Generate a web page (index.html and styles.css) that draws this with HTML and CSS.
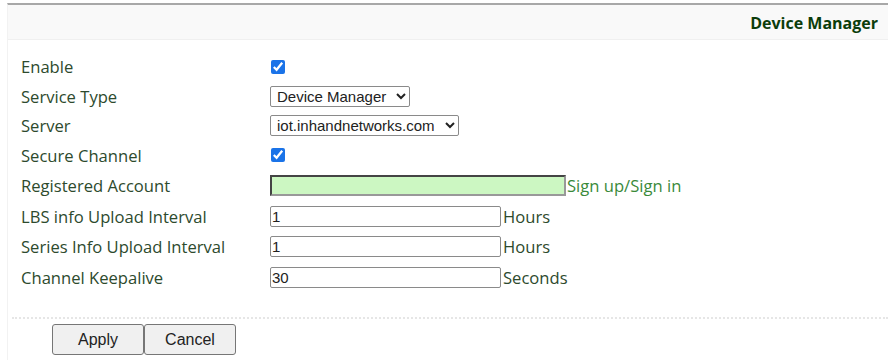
FILE: index.html
```html
<!DOCTYPE html>
<html lang="en">
<head>
  <meta charset="UTF-8">
  <title>Device Manager</title>
  <link rel="stylesheet" href="styles.css">
</head>
<body>
  <div class="page">
    <div class="title">Device Manager</div>

    <div class="form">
      <div class="row">
        <label>Enable</label>
        <div class="field"><input type="checkbox" checked></div>
      </div>
      <div class="row">
        <label>Service Type</label>
        <div class="field">
          <select class="sel-type"><option>Device Manager</option></select>
        </div>
      </div>
      <div class="row">
        <label>Server</label>
        <div class="field">
          <select class="sel-server"><option>iot.inhandnetworks.com</option></select>
        </div>
      </div>
      <div class="row">
        <label>Secure Channel</label>
        <div class="field"><input type="checkbox" checked></div>
      </div>
      <div class="row tall">
        <label>Registered Account</label>
        <div class="field">
          <input type="text" class="account" value="">
          <a href="#" class="sign">Sign up/Sign in</a>
        </div>
      </div>
      <div class="row tall">
        <label>LBS info Upload Interval</label>
        <div class="field"><input type="text" class="num" value="1"><span class="unit">Hours</span></div>
      </div>
      <div class="row tall">
        <label>Series Info Upload Interval</label>
        <div class="field"><input type="text" class="num" value="1"><span class="unit">Hours</span></div>
      </div>
      <div class="row tall">
        <label>Channel Keepalive</label>
        <div class="field"><input type="text" class="num" value="30"><span class="unit">Seconds</span></div>
      </div>
    </div>

    <div class="actions">
      <button>Apply</button><button>Cancel</button>
    </div>
  </div>
</body>
</html>
```

FILE: styles.css
```css
body {
    margin: 0;
    background: #fff;
    font-family: "Segoe UI", "Open Sans", sans-serif;
}

.page {
    margin-left: 7px;
    border-top: 2px solid #a8a8a8;
    margin-top: 3px;
    border-left: 1px solid #f2f2f2;
    min-height: 360px;
}

.title {
    background: #f9f9f9;
    border-bottom: 1px solid #f0f0f0;
    text-align: right;
    font-weight: bold;
    font-size: 16px;
    color: #0b3d0b;
    height: 34px;
    line-height: 37px;
    padding-right: 10px;
}

.form {
    padding-top: 12px;
    padding-bottom: 24px;
    border-bottom: 2px dotted #e6e6e6;
    margin-left: 4px;
}

.row {
    display: flex;
    align-items: center;
    height: 29.5px;
}

.row.tall {
    height: 30.8px;
}

.row label {
    width: 249px;
    padding-left: 9px;
    font-size: 16.6px;
    color: #2d4a2d;
}

.field {
    display: flex;
    align-items: center;
}

input[type="checkbox"] {
    margin: 0 0 0 1px;
    width: 14px;
    height: 14px;
    accent-color: #1a73e8;
}

select, input[type="text"] {
    font-family: Arial, "Liberation Sans", sans-serif;
    font-size: 15px;
    color: #222;
    margin: 0;
    box-sizing: border-box;
}

select {
    height: 21px;
    border: 1px solid #8a8a8a;
    border-radius: 2px;
    background: #fff;
    padding: 0 2px;
}

.sel-type { width: 140px; }
.sel-server { width: 189px; }

input[type="text"] {
    height: 21px;
    border: 1px solid #8a8a8a;
    border-radius: 2px;
    padding: 0 1px;
}

.num { width: 231px; }

input.account {
    width: 296px;
    background: #ccf7c2;
    border: 2px solid #444;
    border-right-color: #999;
    border-bottom-color: #999;
    border-radius: 0;
}

.sign {
    color: #3a8a3a;
    text-decoration: none;
    font-size: 16.6px;
    margin-left: 1px;
}

.unit {
    font-size: 16.6px;
    color: #2d4a2d;
    margin-left: 2px;
}

.actions {
    padding: 5px 0 0 44px;
}

.actions button {
    font-family: Arial, "Liberation Sans", sans-serif;
    font-size: 16px;
    color: #222;
    width: 92px;
    height: 31px;
    margin: 0;
    background: #f0f0f0;
    border: 1px solid #767676;
    border-radius: 3px;
}
```
